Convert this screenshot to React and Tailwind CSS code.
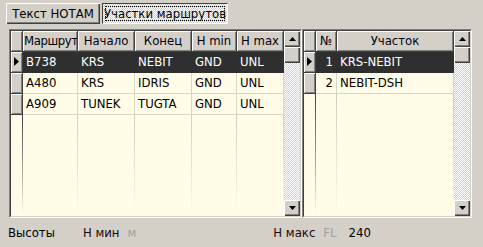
import React from 'react';

const FONT = { fontFamily: '"DejaVu Sans Condensed", "DejaVu Sans", sans-serif' };

const raised = 'bg-[#d4d0c8] shadow-[inset_1px_1px_0_#ffffff,inset_-1px_-1px_0_#404040,inset_-2px_-2px_0_#808080]';
const raisedSoft = 'bg-[#d4d0c8] shadow-[inset_1px_1px_0_#ffffff,inset_-1px_-1px_0_#808080]';
const checker = 'bg-[image:repeating-conic-gradient(#ffffff_0_25%,#d4d0c8_0_50%)] bg-[length:2px_2px]';

const routes = [
  { r: 'B738', a: 'KRS', b: 'NEBIT', min: 'GND', max: 'UNL' },
  { r: 'A480', a: 'KRS', b: 'IDRIS', min: 'GND', max: 'UNL' },
  { r: 'A909', a: 'TUNEK', b: 'TUGTA', min: 'GND', max: 'UNL' },
];

const legs = [
  { n: 1, name: 'KRS-NEBIT' },
  { n: 2, name: 'NEBIT-DSH' },
];

const Arrow = ({ down }) => (
  <svg width="7" height="4" viewBox="0 0 7 4">
    <polygon points={down ? '0,0 7,0 3.5,4' : '0,4 7,4 3.5,0'} fill="#000" />
  </svg>
);

const Scrollbar = () => (
  <div className={`w-[16px] flex flex-col ${checker}`}>
    <div className={`h-[16px] flex items-center justify-center ${raised}`}><Arrow /></div>
    <div className={`h-[16px] ${raised}`}></div>
    <div className="flex-1"></div>
    <div className={`h-[16px] flex items-center justify-center ${raised}`}><Arrow down /></div>
  </div>
);

const HeadCell = ({ w, children, left }) => (
  <div className={`${w} h-[21px] shrink-0 flex items-center overflow-hidden whitespace-nowrap ${left ? 'pl-[1px] tracking-[-0.4px]' : 'justify-center'} border-r border-b border-[#404040] ${raisedSoft} text-[13px] text-[#000010]`}>
    {children}
  </div>
);

const Cell = ({ w, sel, right, children }) => (
  <div className={`${w} h-[21px] shrink-0 flex items-center ${right ? 'justify-end pr-[3px]' : 'pl-[3px]'} border-r border-b ${sel ? 'border-[#2f2f2f] text-white' : 'border-[#d8d6c4] text-black'} text-[13px]`}>
    {children}
  </div>
);

const Indicator = ({ sel }) => (
  <div className={`w-[12px] h-[21px] shrink-0 flex items-center justify-center border-b border-r border-[#404040] ${raisedSoft}`}>
    {sel && (
      <svg width="5" height="9" viewBox="0 0 5 9"><polygon points="0,0 5,4.5 0,9" fill="#000" /></svg>
    )}
  </div>
);

const Filler = ({ widths }) => (
  <div className="flex flex-1">
    <div className="w-[12px] shrink-0 flex justify-end">
      <div className="w-[1px] bg-[linear-gradient(to_bottom,#404040,#fffde8)]"></div>
    </div>
    {widths.map((w, i) => (
      <div key={i} className={`${w} shrink-0 flex justify-end`}>
        <div className="w-[1px] bg-[linear-gradient(to_bottom,#d0cebc,#fffde8)]"></div>
      </div>
    ))}
  </div>
);

const Grid = ({ w, children }) => (
  <div className={`${w} h-[189px] border border-t-[#808080] border-l-[#808080] border-b-white border-r-white`}>
    <div className="h-full flex border border-t-[#404040] border-l-[#404040] border-b-[#d4d0c8] border-r-[#d4d0c8] bg-[#fffde8]">
      {children}
    </div>
  </div>
);

export default function App() {
  const cols = ['w-[55px]', 'w-[57px]', 'w-[57px]', 'w-[45px]', 'w-[47px]'];
  return (
    <div className="w-[483px] h-[247px] bg-[#d4d0c8] flex flex-col overflow-hidden" style={FONT}>
      <div className="flex gap-[2px] pl-[6px] pt-[3px] h-[26px]">
        <div className={`w-[94px] h-[21px] flex items-center justify-center whitespace-nowrap text-[13px] text-black ${raised}`}>Текст НОТАМ</div>
        <div className={`w-[126px] h-[21px] p-[2px] border border-t-[#404040] border-l-[#404040] border-b-white border-r-white ${checker}`}>
          <div className="h-full flex items-center justify-center whitespace-nowrap border border-dotted border-black text-[13px] text-black">Участки маршрутов</div>
        </div>
      </div>

      <div className="flex pl-[9px] mt-[3px]">
        <Grid w="w-[293px]">
          <div className="flex-1 flex flex-col">
            <div className="flex">
              <div className={`w-[12px] h-[21px] shrink-0 border-r border-b border-[#404040] ${raisedSoft}`}></div>
              <HeadCell w={cols[0]} left>Маршрут</HeadCell>
              <HeadCell w={cols[1]}>Начало</HeadCell>
              <HeadCell w={cols[2]}>Конец</HeadCell>
              <HeadCell w={cols[3]}>H min</HeadCell>
              <HeadCell w={cols[4]}>H max</HeadCell>
            </div>
            {routes.map((row, i) => (
              <div key={row.r} className={`flex ${i === 0 ? 'bg-[#2f2f2f]' : ''}`}>
                <Indicator sel={i === 0} />
                <Cell w={cols[0]} sel={i === 0}>{row.r}</Cell>
                <Cell w={cols[1]} sel={i === 0}>{row.a}</Cell>
                <Cell w={cols[2]} sel={i === 0}>{row.b}</Cell>
                <Cell w={cols[3]} sel={i === 0}>{row.min}</Cell>
                <Cell w={cols[4]} sel={i === 0}>{row.max}</Cell>
              </div>
            ))}
            <Filler widths={cols} />
          </div>
          <Scrollbar />
        </Grid>

        <Grid w="w-[170px]">
          <div className="flex-1 flex flex-col">
            <div className="flex">
              <div className={`w-[12px] h-[21px] shrink-0 border-r border-b border-[#404040] ${raisedSoft}`}></div>
              <HeadCell w="w-[21px]">№</HeadCell>
              <HeadCell w="w-[117px]">Участок</HeadCell>
            </div>
            {legs.map((row, i) => (
              <div key={row.n} className={`flex ${i === 0 ? 'bg-[#2f2f2f]' : ''}`}>
                <Indicator sel={i === 0} />
                <Cell w="w-[21px]" sel={i === 0} right>{row.n}</Cell>
                <Cell w="w-[117px]" sel={i === 0}>{row.name}</Cell>
              </div>
            ))}
            <Filler widths={['w-[21px]', 'w-[117px]']} />
          </div>
          <Scrollbar />
        </Grid>
      </div>

      <div className="flex items-center h-[30px] text-[13px] text-black">
        <span className="ml-[8px]">Высоты</span>
        <span className="ml-[28px] text-[#1a0a0a]">Н мин</span>
        <span className="ml-[8px] text-[#a0a0a0]">м</span>
        <span className="ml-[137px] text-[#1a0a0a]">Н макс</span>
        <span className="ml-[8px] text-[#a0a0a0]">FL</span>
        <span className="ml-[12px]">240</span>
      </div>
    </div>
  );
}
